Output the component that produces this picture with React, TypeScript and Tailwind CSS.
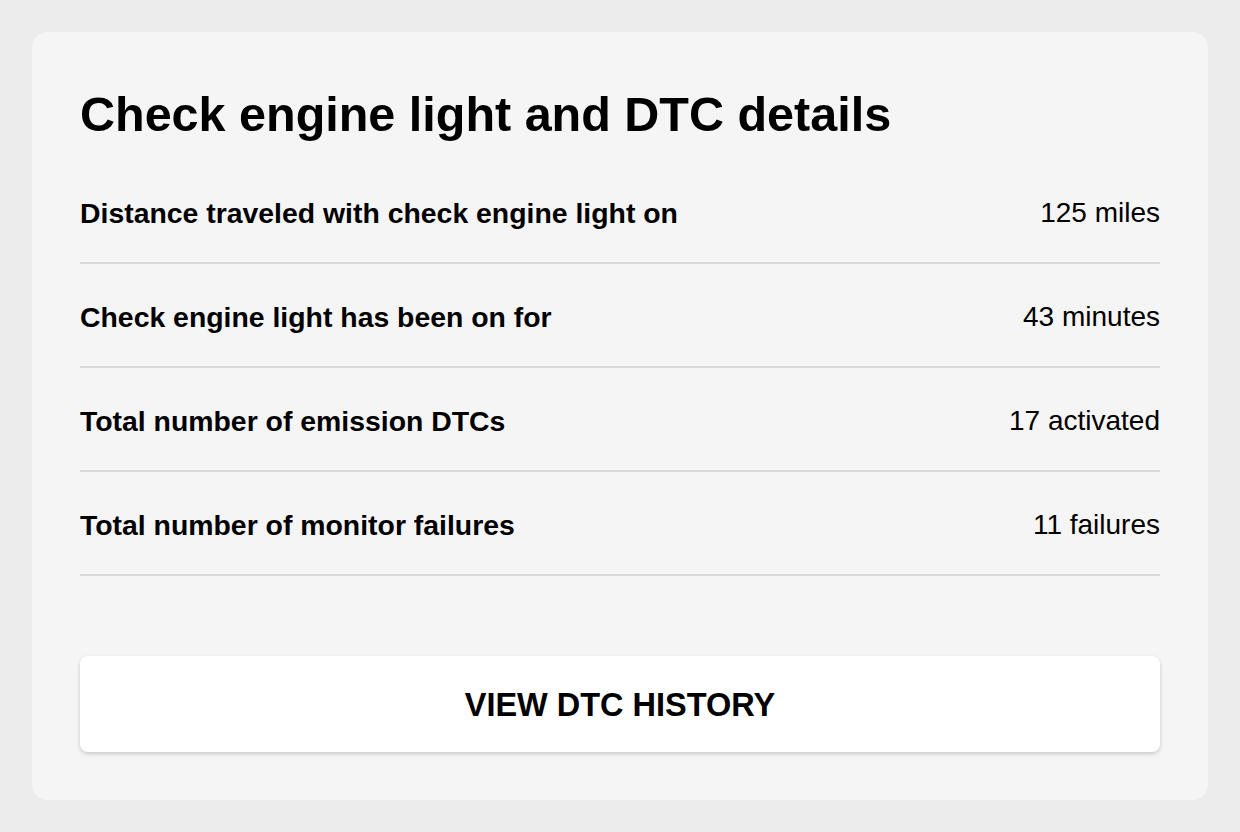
import React from 'react';

interface DetailRow {
  label: string;
  value: string;
}

const rows: DetailRow[] = [
  { label: 'Distance traveled with check engine light on', value: '125 miles' },
  { label: 'Check engine light has been on for', value: '43 minutes' },
  { label: 'Total number of emission DTCs', value: '17 activated' },
  { label: 'Total number of monitor failures', value: '11 failures' },
];

export default function App() {
  return (
    <div
      className="min-h-screen w-full bg-[#ececec] p-8 text-black"
      style={{ fontFamily: '"Liberation Sans", Arial, sans-serif' }}
    >
      <div className="flex flex-col rounded-2xl bg-[#f5f5f5] p-12">
        <h1 className="h-16 pt-[2px] text-[48.5px] font-bold leading-[64px]">
          Check engine light and DTC details
        </h1>

        <div className="mt-4 flex flex-col">
          {rows.map((row) => (
            <div
              key={row.label}
              className="flex h-[104px] items-center justify-between border-b-2 border-[#d8d8d8] pt-1"
            >
              <span className="text-[28.4px] font-bold leading-8">{row.label}</span>
              <span className="text-[28px] leading-8">{row.value}</span>
            </div>
          ))}
        </div>

        <button
          type="button"
          className="mt-20 flex h-24 w-full items-center justify-center rounded-lg bg-white pt-[2px] text-[32.5px] font-bold shadow-[0_2px_4px_rgba(0,0,0,0.18)]"
        >
          VIEW DTC HISTORY
        </button>
      </div>
    </div>
  );
}
